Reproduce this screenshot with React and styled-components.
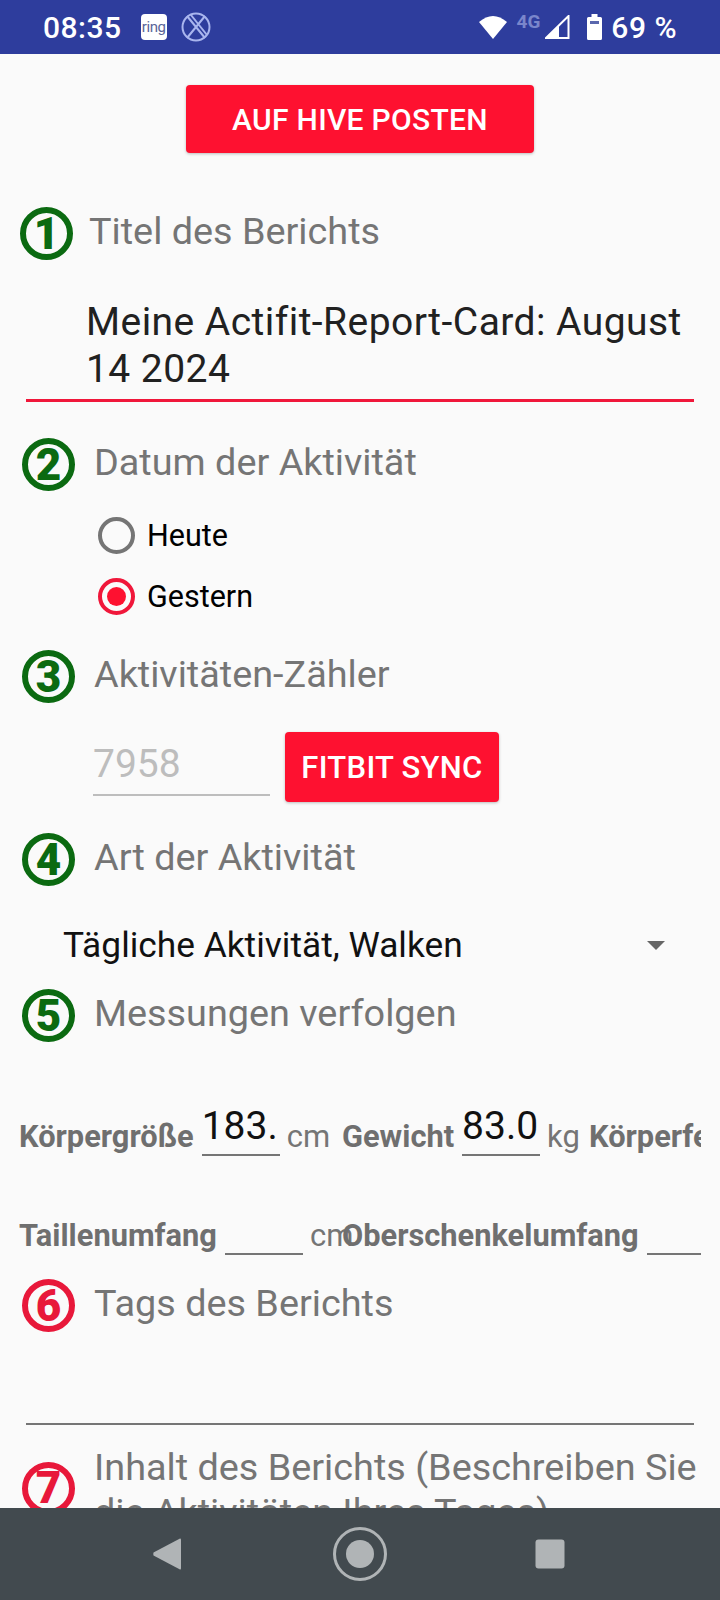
import React from 'react';
import styled, { createGlobalStyle } from 'styled-components';

const GlobalStyle = createGlobalStyle`
  html, body {
    margin: 0;
    padding: 0;
    background: #fafafa;
  }
  * {
    box-sizing: border-box;
  }
`;

const Screen = styled.div`
  width: 720px;
  height: 1600px;
  display: flex;
  flex-direction: column;
  overflow: hidden;
  background: #fafafa;
  font-family: Roboto, "Liberation Sans", sans-serif;
`;

const StatusBar = styled.div`
  height: 54px;
  flex: none;
  display: flex;
  align-items: center;
  padding: 0 43px;
  background: #2e3d9d;
  color: #fff;
`;

const StatusText = styled.span`
  font-size: 30px;
  font-weight: 500;
  letter-spacing: 0.5px;
`;

const RingIcon = styled.span`
  width: 26px;
  height: 26px;
  margin-left: 19px;
  display: flex;
  align-items: center;
  justify-content: center;
  border-radius: 4px;
  background: #fff;
  color: #5a6599;
  font-size: 15px;
  letter-spacing: -0.4px;
`;

const StatusIcons = styled.div`
  margin-left: auto;
  display: flex;
  align-items: center;
`;

const FourG = styled.span`
  margin: -12px 5px 0 9px;
  color: #7a86cb;
  font-size: 19px;
  font-weight: 700;
`;

const SignalGap = styled.span`
  width: ${(p) => p.$width}px;
`;

const CrossedSvg = styled.svg`
  margin-left: 14px;
`;

const Content = styled.div`
  flex: 1;
  min-height: 0;
  overflow: hidden;
  display: flex;
  flex-direction: column;
`;

const RedButton = styled.div`
  flex: none;
  height: ${(p) => p.$height || 68}px;
  width: ${(p) => p.$width}px;
  display: flex;
  align-items: center;
  justify-content: center;
  border-radius: 4px;
  background: #fe1130;
  box-shadow: 0 1px 3px rgba(0, 0, 0, 0.25);
  color: #fff;
  font-size: ${(p) => p.$size}px;
  font-weight: 500;
  letter-spacing: 0.3px;
`;

const TopAction = styled.div`
  flex: none;
  display: flex;
  justify-content: center;
  margin: 31px 0 0 0;
`;

const SectionHeader = styled.div`
  flex: none;
  display: flex;
  align-items: center;
  gap: ${(p) => p.$gap || 19}px;
  margin: ${(p) => p.$top}px 0 0 ${(p) => p.$left || 22}px;
  width: ${(p) => 704 - (p.$left || 22)}px;
`;

const Badge = styled.span`
  flex: none;
  width: 53px;
  height: 53px;
  margin-top: ${(p) => (p.$lift ? -p.$lift : 0)}px;
  display: flex;
  align-items: center;
  justify-content: center;
  border: 6px solid ${(p) => (p.$required ? '#e8183a' : '#0b6a11')};
  border-radius: 50%;
  color: ${(p) => (p.$required ? '#e8183a' : '#0b6a11')};
  font-size: 44px;
  font-weight: 900;
  line-height: 1;
`;

const SectionLabel = styled.span`
  padding-bottom: 4px;
  color: #757575;
  font-size: 37.8px;
  line-height: 45px;
`;

const TitleField = styled.div`
  flex: none;
  margin: 38px 26px 0;
  padding: 1px 0 6px 60px;
  border-bottom: 3px solid #f0173a;
  color: #212121;
  font-size: 39px;
  letter-spacing: 0.45px;
  line-height: 47px;
`;

const RadioGroup = styled.div`
  flex: none;
  display: flex;
  flex-direction: column;
  gap: 24px;
  margin: 26px 0 0 98px;
`;

const RadioRow = styled.div`
  display: flex;
  align-items: center;
  gap: 12px;
  height: 37px;
  color: #000;
  font-size: 30.5px;
`;

const RadioMark = styled.span`
  width: 37px;
  height: 37px;
  display: flex;
  align-items: center;
  justify-content: center;
  border: 4px solid ${(p) => (p.$checked ? '#f0173a' : '#757575')};
  border-radius: 50%;

  &::after {
    content: '';
    width: 19px;
    height: 19px;
    border-radius: 50%;
    background: ${(p) => (p.$checked ? '#fe1130' : 'transparent')};
  }
`;

const CounterRow = styled.div`
  flex: none;
  display: flex;
  align-items: flex-start;
  gap: 15px;
  margin: 29px 0 0 93px;
`;

const CounterInput = styled.div`
  width: 177px;
  height: 64px;
  padding-top: 7px;
  border-bottom: 2px solid #bdbdbd;
  color: #bdbdbd;
  font-size: 39px;
  line-height: 50px;
`;

const ActivitySelect = styled.div`
  flex: none;
  height: 58px;
  margin: 30px 55px 0 63px;
  display: flex;
  align-items: center;
  justify-content: space-between;
  color: #111;
  font-size: 35.3px;
`;

const Caret = styled.span`
  width: 0;
  height: 0;
  border-left: 9px solid transparent;
  border-right: 9px solid transparent;
  border-top: 9px solid #666;
`;

const MeasureTable = styled.div`
  flex: none;
  width: 682px;
  margin-left: 19px;
  overflow: hidden;
`;

const MeasureRow = styled.div`
  display: flex;
  align-items: flex-end;
  height: ${(p) => p.$height}px;
`;

const MeasureCell = styled.div`
  flex: none;
  width: ${(p) => p.$width}px;
  display: flex;
  align-items: flex-end;
  white-space: nowrap;
`;

const MeasureName = styled.span`
  padding-bottom: 2px;
  color: #6f6f6f;
  font-size: 30.8px;
  font-weight: 700;
  line-height: 34px;
`;

const MeasureInput = styled.span`
  flex: none;
  width: 78px;
  height: 56px;
  margin: 0 7px 0 8px;
  padding-top: 4px;
  border-bottom: 2px solid #757575;
  color: #111;
  font-size: 39px;
  line-height: 44px;
  text-align: left;
`;

const MeasureUnit = styled.span`
  padding-bottom: 2px;
  color: #757575;
  font-size: 31px;
  line-height: 34px;
`;

const TagsField = styled.div`
  flex: none;
  height: 93px;
  margin: 0 26px;
  border-bottom: 2px solid #757575;
`;

const NavBar = styled.div`
  height: 92px;
  flex: none;
  display: grid;
  grid-template-columns: repeat(3, 90px);
  justify-content: center;
  column-gap: 101px;
  align-items: center;
  justify-items: center;
  background: #424a4f;
`;

const BackSvg = styled.svg`
  margin-right: 4px;
`;

const RecentsSvg = styled.svg`
  margin-right: 2px;
`;

function WifiIcon() {
  return (
    <svg width="28" height="24" viewBox="0 0 28 24">
      <path d="M0 7Q14 -5 28 7L14 24Z" fill="#fff" />
    </svg>
  );
}

function SignalIcon() {
  return (
    <svg width="25" height="24" viewBox="0 0 25 24">
      <path d="M1 23L23.5 1V23Z" fill="none" stroke="#fff" strokeWidth="2" />
      <path d="M0 24L14 10V24Z" fill="#fff" />
    </svg>
  );
}

function BatteryIcon() {
  return (
    <svg width="15" height="26" viewBox="0 0 15 26">
      <path d="M4.5 0H10.5V3H13.5Q15 3 15 4.5V24.5Q15 26 13.5 26H1.5Q0 26 0 24.5V4.5Q0 3 1.5 3H4.5Z" fill="#fff" />
      <rect x="3" y="7" width="9" height="3" fill="#5a67ad" />
    </svg>
  );
}

function CrossedCircleIcon() {
  return (
    <CrossedSvg width="30" height="30" viewBox="0 0 30 30" fill="none" stroke="#a9b5ee" strokeWidth="2">
      <circle cx="15" cy="15" r="13.5" />
      <path d="M6 4L24 26M10 3L26 23M24 4L6 26" />
    </CrossedSvg>
  );
}

function BackIcon() {
  return (
    <BackSvg width="28" height="32" viewBox="0 0 28 32">
      <path d="M27 0.5Q28 0 28 2V30Q28 32 27 31.5L0.5 17.5Q0 16 0.5 14.5Z" fill="#b0b4b6" />
    </BackSvg>
  );
}

function HomeIcon() {
  return (
    <svg width="54" height="54" viewBox="0 0 54 54">
      <circle cx="27" cy="27" r="25.5" fill="none" stroke="#b0b4b6" strokeWidth="3" />
      <circle cx="27" cy="27" r="14" fill="#b0b4b6" />
    </svg>
  );
}

function RecentsIcon() {
  return (
    <RecentsSvg width="30" height="30" viewBox="0 0 30 30">
      <rect x="0.5" y="0.5" width="29" height="29" rx="3" fill="#b0b4b6" />
    </RecentsSvg>
  );
}

export default function App() {
  return (
    <Screen>
      <GlobalStyle />
      <StatusBar>
        <StatusText>08:35</StatusText>
        <RingIcon>ring</RingIcon>
        <CrossedCircleIcon />
        <StatusIcons>
          <WifiIcon />
          <FourG>4G</FourG>
          <SignalIcon />
          <SignalGap $width={17} />
          <BatteryIcon />
          <SignalGap $width={9} />
          <StatusText>69 %</StatusText>
        </StatusIcons>
      </StatusBar>

      <Content>
        <TopAction>
          <RedButton $width={348} $size={30}>AUF HIVE POSTEN</RedButton>
        </TopAction>

        <SectionHeader $top={54} $left={20} $gap={16}>
          <Badge>1</Badge>
          <SectionLabel>Titel des Berichts</SectionLabel>
        </SectionHeader>
        <TitleField>Meine Actifit-Report-Card: August 14 2024</TitleField>

        <SectionHeader $top={36}>
          <Badge>2</Badge>
          <SectionLabel>Datum der Aktivität</SectionLabel>
        </SectionHeader>
        <RadioGroup>
          <RadioRow>
            <RadioMark />
            Heute
          </RadioRow>
          <RadioRow>
            <RadioMark $checked />
            Gestern
          </RadioRow>
        </RadioGroup>

        <SectionHeader $top={35}>
          <Badge>3</Badge>
          <SectionLabel>Aktivitäten-Zähler</SectionLabel>
        </SectionHeader>
        <CounterRow>
          <CounterInput>7958</CounterInput>
          <RedButton $width={214} $height={70} $size={31}>FITBIT SYNC</RedButton>
        </CounterRow>

        <SectionHeader $top={31}>
          <Badge>4</Badge>
          <SectionLabel>Art der Aktivität</SectionLabel>
        </SectionHeader>
        <ActivitySelect>
          Tägliche Aktivität, Walken
          <Caret />
        </ActivitySelect>

        <SectionHeader $top={15}>
          <Badge>5</Badge>
          <SectionLabel>Messungen verfolgen</SectionLabel>
        </SectionHeader>
        <MeasureTable>
          <MeasureRow $height={114}>
            <MeasureCell $width={323}>
              <MeasureName>Körpergröße</MeasureName>
              <MeasureInput>183.</MeasureInput>
              <MeasureUnit>cm</MeasureUnit>
            </MeasureCell>
            <MeasureCell $width={247}>
              <MeasureName>Gewicht</MeasureName>
              <MeasureInput>83.0</MeasureInput>
              <MeasureUnit>kg</MeasureUnit>
            </MeasureCell>
            <MeasureCell $width={200}>
              <MeasureName>Körperfett</MeasureName>
            </MeasureCell>
          </MeasureRow>
          <MeasureRow $height={99}>
            <MeasureCell $width={323}>
              <MeasureName>Taillenumfang</MeasureName>
              <MeasureInput />
              <MeasureUnit>cm</MeasureUnit>
            </MeasureCell>
            <MeasureCell $width={400}>
              <MeasureName>Oberschenkelumfang</MeasureName>
              <MeasureInput />
            </MeasureCell>
          </MeasureRow>
        </MeasureTable>

        <SectionHeader $top={24}>
          <Badge $required>6</Badge>
          <SectionLabel>Tags des Berichts</SectionLabel>
        </SectionHeader>
        <TagsField />

        <SectionHeader $top={20}>
          <Badge $required $lift={8}>7</Badge>
          <SectionLabel>Inhalt des Berichts (Beschreiben Sie die Aktivitäten Ihres Tages)</SectionLabel>
        </SectionHeader>
      </Content>

      <NavBar>
        <BackIcon />
        <HomeIcon />
        <RecentsIcon />
      </NavBar>
    </Screen>
  );
}
